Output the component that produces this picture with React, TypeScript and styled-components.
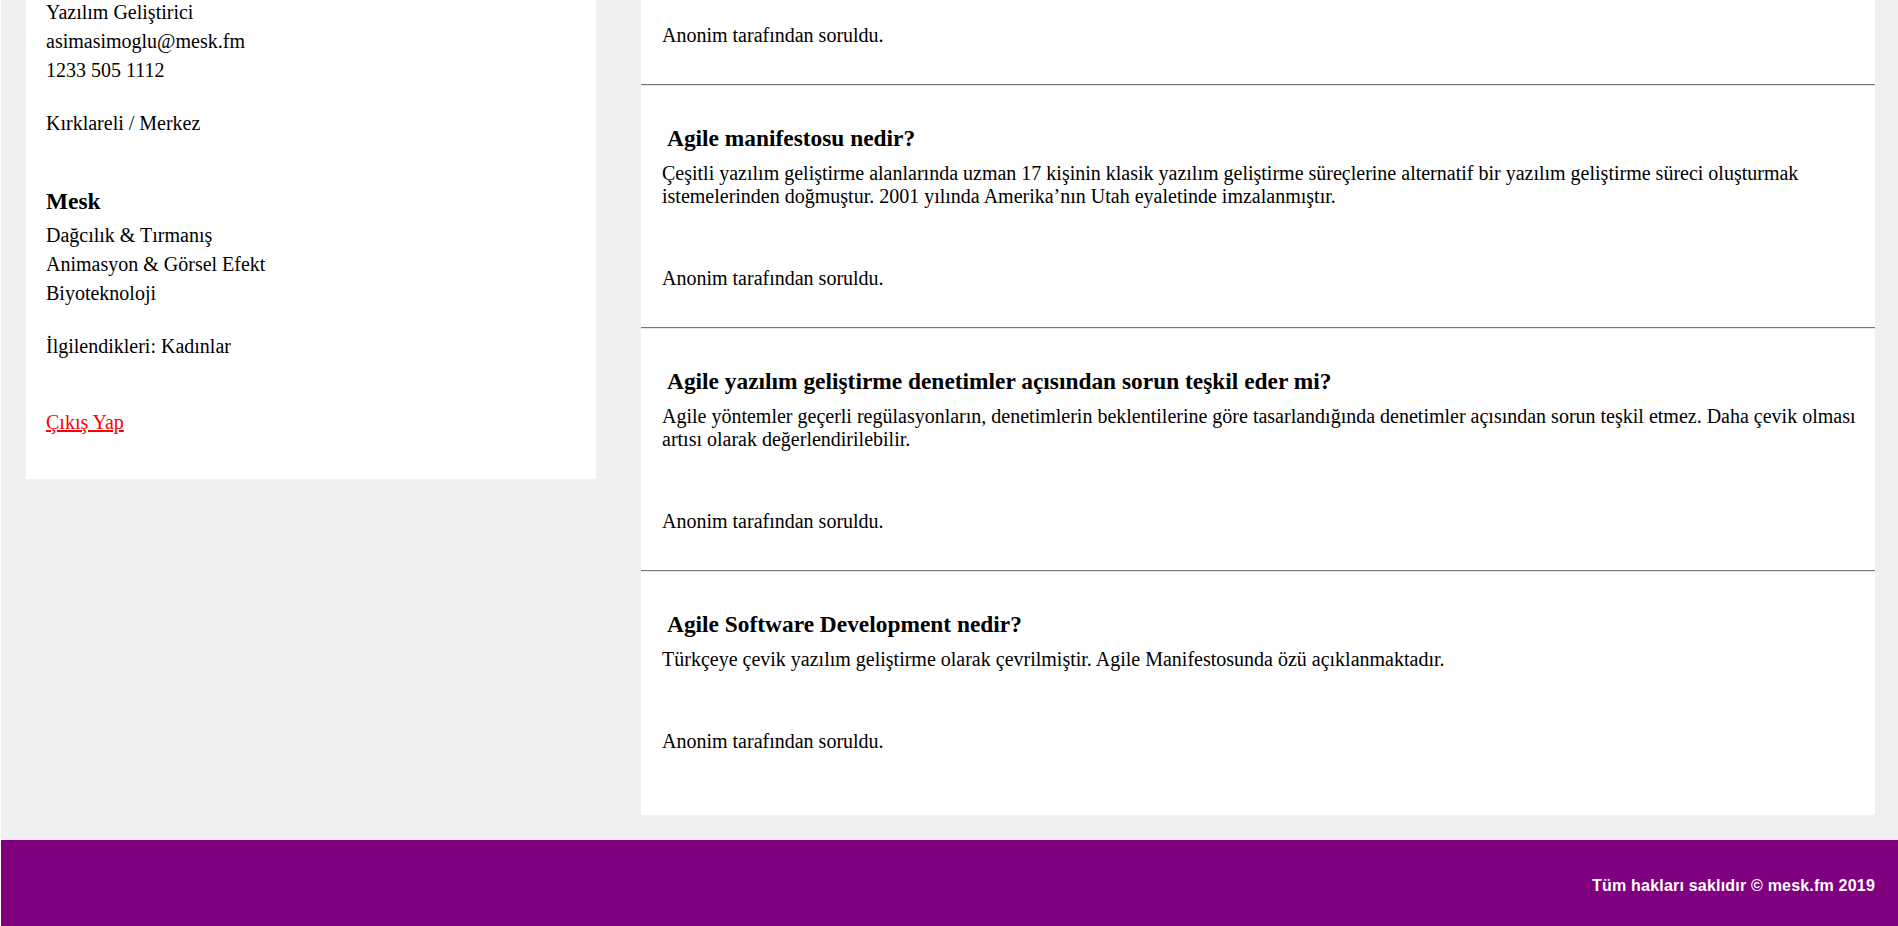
import React from "react";
import styled, { createGlobalStyle } from "styled-components";

const GlobalStyle = createGlobalStyle`
  html, body {
    margin: 0;
    padding: 0;
    background: #ffffff;
    overflow: hidden;
  }
  body {
    margin-left: 1px;
    font-family: "Liberation Serif", "Times New Roman", serif;
    color: #000;
  }
`;

const Page = styled.div`
  display: flex;
  flex-direction: column;
  background: #f0f0f0;
`;

const Main = styled.main`
  display: flex;
  align-items: flex-start;
  gap: 45px;
  padding: 0 23px 25px 25px;
  background: #f0f0f0;
`;

const Sidebar = styled.aside`
  flex: none;
  width: 570px;
  box-sizing: border-box;
  background: #ffffff;
  padding: 0 20px 42px;
  font-size: 20px;
`;

const InfoGroup = styled.div<{ $gap: number }>`
  margin-top: ${(p) => p.$gap}px;
  line-height: 29px;
`;

const InfoLine = styled.div``;

const SideTitle = styled.h3`
  margin: 50px 0 0;
  font-size: 23.4px;
  line-height: 27px;
  font-weight: bold;
`;

const LogoutLink = styled.a`
  color: #ff0000;
  text-decoration: underline;
  cursor: pointer;
`;

const Feed = styled.section`
  flex: 1;
  min-width: 0;
  background: #ffffff;
  padding-bottom: 25px;
`;

const Tail = styled.div`
  padding: 24px 12px 37px 21px;
`;

const Divider = styled.hr`
  margin: 0;
  height: 0;
  border: 0;
  border-top: 1px solid #777777;
  border-bottom: 1px solid #e6e6e6;
`;

const Question = styled.article`
  padding: 39px 12px 37px 21px;
`;

const QTitle = styled.h3`
  margin: 0;
  padding-left: 5px;
  font-size: 23.4px;
  line-height: 27px;
  font-weight: bold;
`;

const QBody = styled.p`
  margin: 10px 0 0;
  font-size: 20px;
  line-height: 23px;
`;

const Asker = styled.p<{ $top?: number }>`
  margin: ${(p) => p.$top ?? 0}px 0 0;
  font-size: 20px;
  line-height: 23px;
`;

const Footer = styled.footer`
  height: 86px;
  box-sizing: border-box;
  background: #800080;
  color: #ffffff;
  padding: 37px 23px 0;
  text-align: right;
  font-family: "Liberation Sans", Arial, sans-serif;
  font-weight: bold;
  font-size: 16px;
  line-height: 18px;
  letter-spacing: 0.2px;
`;

const questions = [
  {
    title: "Agile manifestosu nedir?",
    body: "Çeşitli yazılım geliştirme alanlarında uzman 17 kişinin klasik yazılım geliştirme süreçlerine alternatif bir yazılım geliştirme süreci oluşturmak istemelerinden doğmuştur. 2001 yılında Amerika’nın Utah eyaletinde imzalanmıştır.",
  },
  {
    title: "Agile yazılım geliştirme denetimler açısından sorun teşkil eder mi?",
    body: "Agile yöntemler geçerli regülasyonların, denetimlerin beklentilerine göre tasarlandığında denetimler açısından sorun teşkil etmez. Daha çevik olması artısı olarak değerlendirilebilir.",
  },
  {
    title: "Agile Software Development nedir?",
    body: "Türkçeye çevik yazılım geliştirme olarak çevrilmiştir. Agile Manifestosunda özü açıklanmaktadır.",
  },
];

export default function App() {
  return (
    <>
      <GlobalStyle />
      <Page>
        <Main>
          <Sidebar>
            <InfoGroup $gap={-2}>
              <InfoLine>Yazılım Geliştirici</InfoLine>
              <InfoLine>asimasimoglu@mesk.fm</InfoLine>
              <InfoLine>1233 505 1112</InfoLine>
            </InfoGroup>
            <InfoGroup $gap={24}>
              <InfoLine>Kırklareli / Merkez</InfoLine>
            </InfoGroup>
            <SideTitle>Mesk</SideTitle>
            <InfoGroup $gap={6}>
              <InfoLine>Dağcılık &amp; Tırmanış</InfoLine>
              <InfoLine>Animasyon &amp; Görsel Efekt</InfoLine>
              <InfoLine>Biyoteknoloji</InfoLine>
            </InfoGroup>
            <InfoGroup $gap={24}>
              <InfoLine>İlgilendikleri: Kadınlar</InfoLine>
            </InfoGroup>
            <InfoGroup $gap={47}>
              <LogoutLink>Çıkış Yap</LogoutLink>
            </InfoGroup>
          </Sidebar>
          <Feed>
            <Tail>
              <Asker>Anonim tarafından soruldu.</Asker>
            </Tail>
            {questions.map((q) => (
              <React.Fragment key={q.title}>
                <Divider />
                <Question>
                  <QTitle>{q.title}</QTitle>
                  <QBody>{q.body}</QBody>
                  <Asker $top={59}>Anonim tarafından soruldu.</Asker>
                </Question>
              </React.Fragment>
            ))}
          </Feed>
        </Main>
        <Footer>Tüm hakları saklıdır © mesk.fm 2019</Footer>
      </Page>
    </>
  );
}
